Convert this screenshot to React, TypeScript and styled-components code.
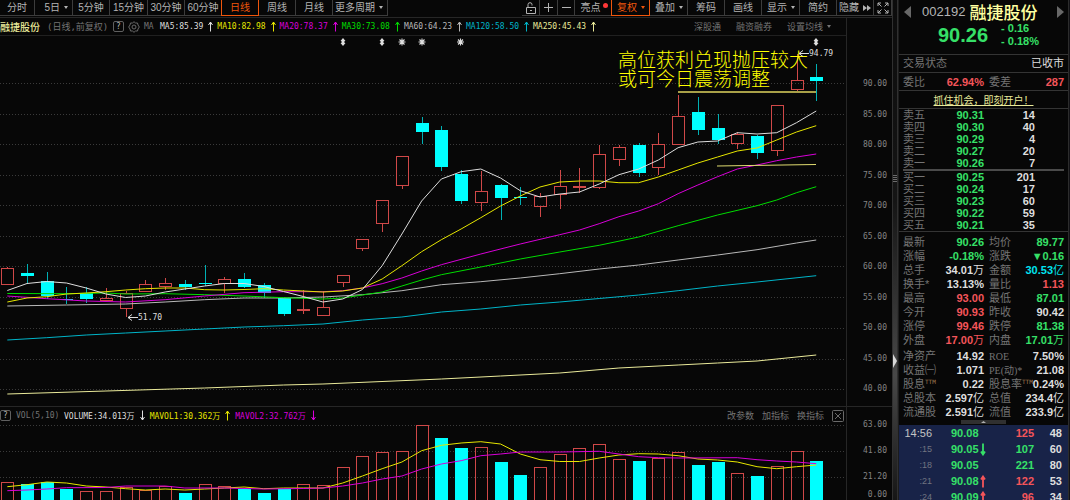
import React from "react";
import styled, { createGlobalStyle } from "styled-components";

const CJK = '"Noto Sans CJK SC", sans-serif';
const MONO = `"DejaVu Sans Mono", ${CJK}`;
const SANS = `"Liberation Sans", ${CJK}`;
const NARROW = `"Liberation Sans Narrow", "Liberation Sans", ${CJK}`;

const color = {
  bg: "#070707",
  line: "#262626",
  dim: "#747474",
  text: "#b4b4b4",
  white: "#dedede",
  red: "#f4555a",
  green: "#36e068",
  cyan: "#00ffff",
  orange: "#f0560c",
  yellow: "#e6e600",
  magenta: "#d800d8",
  lime: "#00dc00",
  grey: "#b8b8b8",
  teal: "#00b4c8",
  cream: "#eaea9a",
};

const GlobalStyle = createGlobalStyle`
  * { box-sizing: border-box; }
  body { margin: 0; background: ${color.bg}; color: ${color.text}; font-family: ${SANS}; font-size: 11px; }
  button { margin: 0; padding: 0; border: 0; background: none; color: inherit; font: inherit; cursor: pointer; }
  table { border-collapse: collapse; border-spacing: 0; }
  svg { display: block; flex: none; }
`;

const Page = styled.div`
  display: grid;
  grid-template-columns: minmax(0, 1fr) 6px 170px 2px;
  height: 100vh;
  overflow: hidden;
`;

const Main = styled.main`
  display: flex;
  flex-direction: column;
  min-width: 0;
  overflow: hidden;
`;

/* toolbar */
const Toolbar = styled.nav`
  display: flex;
  justify-content: space-between;
  flex: none;
  height: 17px;
  font-family: ${NARROW};
  font-size: 10px;
`;
const ToolGroup = styled.div`
  display: flex;
  height: 16px;
`;
const Tool = styled.button<{ $w: number; $active?: boolean; $menu?: boolean }>`
  display: flex;
  align-items: center;
  justify-content: ${(p) => (p.$menu ? "flex-end" : "center")};
  gap: 4px;
  width: ${(p) => p.$w}px;
  padding-right: ${(p) => (p.$menu ? 4 : 0)}px;
  border-right: 1px solid ${(p) => (p.$active ? color.orange : "#3c3c3c")};
  border-bottom: 1px solid ${(p) => (p.$active ? color.orange : "#3c3c3c")};
  box-shadow: ${(p) => (p.$active ? `-1px 0 0 ${color.orange}` : "none")};
  color: ${(p) => (p.$active ? color.orange : color.text)};
  line-height: 15px;
  white-space: nowrap;
`;
const HotDot = styled.i`
  width: 5px;
  height: 5px;
  margin: -4px -2px 0 -2px;
  border-radius: 50%;
  background: #ff3838;
`;

/* indicator legends */
const Legend = styled.header<{ $h: number }>`
  display: flex;
  justify-content: space-between;
  flex: none;
  height: ${(p) => p.$h}px;
  border-top: 1px solid ${color.line};
  font-family: ${MONO};
  font-size: 8px;
`;
const LegendBody = styled.div<{ $underline?: boolean }>`
  display: flex;
  flex: 1;
  align-items: center;
  justify-content: space-between;
  padding-top: ${(p) => (p.$underline ? 0 : 4)}px;
  border-bottom: ${(p) => (p.$underline ? "1px solid #202020" : "0")};
`;
const LegendItems = styled.div<{ $gap: number }>`
  display: flex;
  align-items: center;
  gap: ${(p) => p.$gap}px;
  white-space: nowrap;
`;
const StockTitle = styled.h1`
  margin: 0;
  width: 43px;
  color: ${color.cream};
  font: 500 10px/16px ${CJK};
`;
const Period = styled.span`
  width: 62px;
  color: ${color.dim};
  font-size: 9px;
`;
const IndicatorName = styled.span<{ $w: number }>`
  width: ${(p) => p.$w}px;
  color: ${color.dim};
`;
const IndicatorValue = styled.span<{ $c: string }>`
  display: flex;
  align-items: center;
  gap: 5px;
  color: ${(p) => p.$c};
`;
const LegendLinks = styled.div<{ $gap: number }>`
  display: flex;
  align-items: center;
  gap: ${(p) => p.$gap}px;
  color: ${color.dim};
  font-family: ${CJK};
  font-size: 9px;
`;
const LinkButton = styled.button`
  display: flex;
  align-items: center;
  gap: 4px;
  line-height: 12px;
  white-space: nowrap;
`;
const AxisHead = styled.div`
  width: 46px;
  border-left: 1px solid ${color.line};
`;
const BoxButton = styled.button`
  display: flex;
  align-items: center;
  justify-content: center;
  width: 11px;
  height: 11px;
  border: 1px solid #606060;
  border-radius: 2px;
  color: ${color.text};
  font: 8px/9px ${MONO};
`;

/* charts */
const ChartRow = styled.section<{ $h?: number }>`
  display: flex;
  flex: ${(p) => (p.$h ? "none" : "1 0 0")};
  height: ${(p) => (p.$h ? `${p.$h}px` : "auto")};
  min-height: 0;
  overflow: hidden;
`;
const Plot = styled.svg`
  flex: 1;
  min-width: 0;
  height: 100%;
`;
const Axis = styled.ol`
  flex: none;
  width: 46px;
  margin: 0;
  padding: 0 5px 0 0;
  border-left: 1px solid ${color.line};
  color: #848484;
  font-family: ${MONO};
  font-size: 8px;
  line-height: 10px;
  text-align: right;
  list-style: none;
`;
const PriceAxis = styled(Axis)`
  display: grid;
  align-content: space-between;
  grid-auto-rows: 10px;
  padding-top: 43px;
  padding-bottom: 12px;
`;
const VolumeAxis = styled(Axis)`
  display: flex;
  flex-direction: column;
  li + li {
    margin-top: 16px;
  }
  li:last-child {
    margin-top: auto;
  }
`;

/* splitter */
const Splitter = styled.div`
  display: flex;
  flex-direction: column;
  align-items: center;
  border-left: 1px solid #303030;
  border-right: 1px solid #303030;
  background: linear-gradient(#0c0c0c, #151515 40%, #484848 75%, #161616);
`;
const Grip = styled.svg`
  margin-top: 174px;
`;
const Fold = styled.svg`
  margin-top: 172px;
`;

/* quote panel */
const Side = styled.aside`
  display: flex;
  flex-direction: column;
  min-width: 0;
  overflow: hidden;
  border-left: 1px solid #1c1c1c;
`;
const EdgeStrip = styled.div`
  background: #121216;
  border-left: 1px solid #2c2c2c;
`;
const QuoteHead = styled.header`
  flex: none;
  height: 55px;
  padding: 2px 4px 0 5px;
  border-bottom: 1px solid #343434;
`;
const NameLine = styled.div`
  display: flex;
  align-items: center;
  height: 19px;
`;
const Code = styled.span`
  margin-left: 11px;
  font-size: 13px;
`;
const Name = styled.h2`
  flex: 1;
  margin: 0 0 0 4px;
  color: #ffffa0;
  font: 500 17px/19px ${CJK};
`;
const PriceLine = styled.div`
  display: flex;
  align-items: center;
  gap: 13px;
  padding-left: 34px;
  color: ${color.green};
`;
const LastPrice = styled.strong`
  font-size: 20px;
  line-height: 28px;
`;
const Change = styled.div`
  font: bold 11px/13px ${SANS};
`;
const StatusRow = styled.div`
  display: flex;
  justify-content: space-between;
  flex: none;
  height: 18px;
  padding: 0 4px;
  border-bottom: 1px solid #343434;
  color: ${color.white};
  line-height: 17px;
`;
const Label = styled.span`
  color: ${color.dim};
`;
const Promo = styled.div`
  flex: none;
  height: 18px;
  border-bottom: 1px solid #343434;
  text-align: center;
`;
const PromoLink = styled.a`
  color: ${color.cream};
  font: 10px/17px ${CJK};
`;
const DataTable = styled.table<{ $row: number }>`
  width: 100%;
  table-layout: fixed;
  line-height: 12px;
  white-space: nowrap;
  tr {
    height: ${(p) => p.$row}px;
  }
  th,
  td {
    padding: 0;
  }
  th {
    color: ${color.dim};
    font-weight: normal;
    text-align: left;
  }
`;
const Book = styled.div<{ $last?: boolean }>`
  flex: none;
  margin: 0 4px;
  border-bottom: ${(p) => (p.$last ? "0" : "2px solid #4a4a4a")};
`;
const Rule = styled.hr`
  flex: none;
  width: 100%;
  height: 1px;
  margin: 0;
  border: 0;
  background: #343434;
`;
const Num = styled.td<{ $c?: string }>`
  color: ${(p) => p.$c || color.white};
  font-weight: bold;
  text-align: right;
`;
const Unit = styled.span`
  font-weight: normal;
`;
const Ttm = styled.sup`
  color: #a07850;
  font: 6px/6px ${MONO};
  vertical-align: 4px;
`;
const Stats = styled.div<{ $top: number }>`
  flex: none;
  padding: ${(p) => p.$top}px 4px 0;
`;
const CollapseBar = styled.div`
  display: flex;
  justify-content: center;
  flex: none;
  height: 6px;
  padding-top: 1px;
`;
const CollapseButton = styled.button`
  display: flex;
  align-items: center;
  justify-content: center;
  width: 45px;
  height: 4px;
  background: #303030;
`;
const Ticks = styled.section`
  flex: 1;
  min-height: 0;
  padding: 0 6px 0 3px;
  overflow: hidden;
  background: #182348;
`;
const Time = styled.td<{ $minor?: boolean }>`
  padding-right: 1px;
  color: ${(p) => (p.$minor ? "#707480" : "#c4c4c4")};
  font-size: ${(p) => (p.$minor ? 9 : 11)}px;
  text-align: right;
`;
const TickPrice = styled.td`
  color: ${color.green};
  font-weight: bold;
`;
const TickValue = styled.div`
  display: flex;
  align-items: center;
  gap: 1px;
  padding-left: 19px;
`;
const RomanText = styled.span`
  font-family: "Liberation Serif", ${CJK};
  font-size: 10px;
`;

const Caret = () => (
  <svg width="4" height="3" viewBox="0 0 4 3" aria-hidden>
    <path d="M0 0h4L2 3z" fill="currentColor" />
  </svg>
);

const Arrow = ({ down }: { down?: boolean }) => (
  <svg width="5" height="11" viewBox="0 0 5 11" aria-hidden>
    <path
      d={down ? "M2.5 0.5V10M0.5 7L2.5 10L4.5 7" : "M2.5 10.5V1M0.5 4L2.5 1L4.5 4"}
      fill="none"
      stroke="currentColor"
    />
  </svg>
);

const TickArrow = ({ up }: { up?: boolean }) => (
  <svg width="6" height="13" viewBox="0 0 6 13" aria-hidden>
    <path
      d={up ? "M3 12.5V3M1 4.5L3 1.5L5 4.5" : "M3 0.5V10M1 8.5L3 11.5L5 8.5"}
      fill="none"
      stroke={up ? color.red : color.green}
      strokeWidth="1.8"
    />
  </svg>
);

const periods: { label: string; w: number; caret?: boolean; active?: boolean }[] = [
  { label: "分时", w: 35 },
  { label: "5日", w: 38, caret: true },
  { label: "5分钟", w: 37 },
  { label: "15分钟", w: 38 },
  { label: "30分钟", w: 37 },
  { label: "60分钟", w: 37 },
  { label: "日线", w: 37, active: true },
  { label: "周线", w: 37 },
  { label: "月线", w: 37 },
  { label: "更多周期", w: 55, caret: true },
];

const tools: { label: string; w: number; caret?: boolean; active?: boolean; dot?: boolean }[] = [
  { label: "亮点", w: 37, dot: true },
  { label: "复权", w: 38, caret: true, active: true },
  { label: "叠加", w: 38, caret: true },
  { label: "筹码", w: 37 },
  { label: "画线", w: 37 },
  { label: "显示", w: 38, caret: true },
  { label: "简约", w: 37 },
];

const averages: [string, string][] = [
  ["MA5:85.39", color.white],
  ["MA10:82.98", color.yellow],
  ["MA20:78.37", color.magenta],
  ["MA30:73.08", color.lime],
  ["MA60:64.23", color.grey],
  ["MA120:58.50", color.teal],
  ["MA250:45.43", color.cream],
];

const STEP = 19.73;
const xAt = (i: number) => 7.3 + STEP * i;

/* high, body top, body bottom, low, rising */
const candles: [number, number, number, number, 0 | 1][] = [
  [267, 268, 284, 284, 1], [264, 273, 276, 284, 0], [272, 281, 296, 299, 0], [287, 299, 300, 304, 0],
  [287, 293, 299, 303, 0], [288, 298, 300, 302, 1], [291, 293, 308, 317, 1], [280, 284, 291, 292, 1],
  [278, 283, 286, 290, 1], [280, 284, 287, 290, 0], [265, 283, 284, 286, 0], [277, 279, 283, 293, 1],
  [273, 279, 287, 288, 0], [283, 285, 293, 298, 0], [297, 298, 314, 316, 0], [290, 309, 310, 314, 1],
  [291, 307, 315, 315, 1], [275, 275, 282, 287, 1], [239, 239, 248, 251, 1], [200, 200, 223, 232, 1],
  [156, 156, 185, 189, 1], [117, 123, 132, 144, 0], [126, 130, 167, 171, 0], [170, 174, 201, 204, 0],
  [171, 191, 202, 211, 1], [184, 185, 198, 220, 0], [187, 197, 198, 205, 0], [193, 196, 206, 217, 1],
  [170, 186, 194, 209, 1], [168, 186, 187, 193, 1], [145, 154, 187, 189, 1], [145, 147, 159, 166, 1],
  [143, 145, 173, 177, 0], [133, 144, 167, 175, 1], [95, 116, 144, 144, 1], [97, 112, 130, 135, 0],
  [114, 128, 140, 144, 0], [132, 134, 143, 149, 1], [135, 136, 153, 159, 0], [105, 105, 150, 156, 1],
  [54, 80, 89, 92, 1], [64, 77, 81, 101, 0],
];

type Series = [number, number][];
const dense = (ys: number[]): Series => ys.map((y, i) => [i, y]);

const priceLines: { c: string; pts: Series }[] = [
  { c: color.cream, pts: [[0, 394], [5, 391], [10, 388], [14, 385], [16, 384], [22, 379], [25, 376], [28, 373], [31, 368], [34, 365], [36, 363], [38, 361], [41, 355]] },
  { c: color.teal, pts: [[0, 340], [2, 337.7], [4, 335], [6, 333], [8, 331], [10, 329], [12, 327], [14, 325.7], [16, 324], [18, 320], [20, 317], [22, 312], [24, 309], [26, 305], [28, 302], [30, 298.5], [32, 295], [34, 290.7], [36, 286], [38, 282], [41, 275.7]] },
  { c: color.grey, pts: [[0, 306], [3, 305], [6, 304], [8, 302], [10, 299.7], [12, 298], [14, 298], [16, 297], [18, 294.7], [20, 290.7], [22, 284.7], [24, 281.7], [26, 278], [28, 273.7], [30, 269], [32, 265], [34, 260], [36, 255], [38, 249.7], [40, 243], [41, 240]] },
  { c: color.lime, pts: [[0, 293.5], [3, 293.7], [5, 293], [6, 294], [8, 293.7], [10, 294.7], [12, 296], [14, 297.7], [16, 299], [17, 298], [18, 295], [19, 292], [20, 286], [21, 280], [22, 274.7], [24, 267], [26, 259], [28, 252], [30, 245.3], [32, 237], [34, 225.7], [36, 215], [38, 205.7], [39, 200], [40, 192.7], [41, 186.7]] },
  { c: color.magenta, pts: [[0, 296], [2, 298.7], [4, 301], [6, 302], [8, 299.7], [10, 296], [12, 292.7], [14, 291.7], [16, 291.7], [17, 290.7], [18, 288], [19, 283.7], [20, 278], [21, 271], [22, 264.7], [24, 254], [26, 244], [28, 234.7], [29, 230], [30, 223.7], [31, 216.7], [32, 211], [33, 203.7], [34, 193.7], [35, 185], [36, 176.7], [37, 169], [38, 165], [39, 160.7], [40, 157], [41, 154]] },
  { c: color.yellow, pts: dense([302, 298, 296.7, 294, 293, 291.7, 290, 288.7, 288, 288, 289.7, 290, 289.5, 288.7, 290, 291, 292, 291, 288, 279, 265.7, 251.7, 239.7, 229, 217.7, 206, 196, 187, 182, 181, 181, 182.7, 182.7, 177, 170, 163, 157, 151, 148, 140, 132, 125.7]) },
  { c: color.white, pts: dense([290.5, 283.5, 281.5, 283, 288, 294, 297.5, 296, 292, 289, 286, 283.5, 283.5, 286.5, 291.5, 296.5, 302, 299, 289.5, 265.7, 234, 201, 179, 171.7, 169, 178, 190.7, 197, 194, 192, 184, 174.7, 169, 160, 147.7, 142, 141, 132.7, 134, 132.7, 122.7, 111]) },
];

/* bar top, rising */
const volumes: [number, 0 | 1][] = [
  [482, 1], [484, 0], [482, 0], [489, 0], [491, 1], [491, 1], [487, 1], [490, 1], [486, 1], [493, 0],
  [484, 1], [486, 1], [489, 0], [493, 0], [489, 0], [484, 1], [485, 1], [467, 1], [456, 1], [452, 1],
  [451, 1], [425, 1], [438, 0], [448, 0], [447, 1], [462, 0], [475, 0], [467, 1], [454, 1], [448, 1],
  [444, 1], [459, 1], [461, 0], [458, 1], [452, 1], [465, 0], [462, 0], [473, 1], [476, 0], [466, 1],
  [451, 1], [461, 0],
];

const volumeLines: { c: string; pts: Series }[] = [
  { c: color.yellow, pts: dense([486.7, 484.7, 482, 483, 486, 487, 488.7, 490, 489, 490, 489, 488, 487, 488.7, 488, 488, 488, 483, 476, 468.7, 462, 450.7, 445.3, 443, 441.7, 444, 454, 459.7, 461.5, 461.5, 458, 455, 453.7, 454, 455.7, 459, 460, 462, 466.7, 468.7, 466.7, 465]) },
  { c: color.magenta, pts: [[0, 490.7], [1, 490], [2, 489], [3, 487.7], [5, 487.5], [6, 486], [8, 486], [9, 488], [11, 488], [13, 489], [15, 488.5], [16, 488], [17, 486], [18, 483], [19, 479], [20, 476], [21, 469], [22, 464], [23, 460.7], [24, 455.7], [25, 454], [26, 452], [28, 452], [30, 451.3], [31, 454], [32, 456.7], [33, 457.7], [34, 458], [37, 457.7], [38, 459.7], [39, 461], [40, 462], [41, 463.7]] },
];

const toPoints = (pts: Series) => pts.map(([i, y]) => `${xAt(i)},${y}`).join(" ");

const GridLine = ({ y }: { y: number }) => (
  <line x1="0" x2="100%" y1={y} y2={y} stroke="#3a3a3a" strokeDasharray="1 2" shapeRendering="crispEdges" />
);

const Star = ({ x }: { x: number }) => (
  <path
    d={`M${x} 38.5v7M${x - 3.5} 42h7M${x - 2.5} 39.5l5 5M${x + 2.5} 39.5l-5 5`}
    stroke={color.white}
    strokeWidth="1.1"
  />
);

const Updown = ({ x }: { x: number }) => (
  <path d={`M${x} 38l2.5 3h-1v2h1l-2.5 3l-2.5-3h1v-2h-1z`} fill={color.white} />
);

const PriceChart = () => (
  <ChartRow $h={370}>
    <Plot aria-label="日线">
      <g transform="translate(0 -36)">
        {[83, 114, 144, 175, 205, 236, 266, 297, 328, 359, 389].map((y) => (
          <GridLine key={y} y={y + 0.5} />
        ))}
        <g shapeRendering="crispEdges">
          {candles.map(([high, top, bottom, low, up], i) => {
            const x = Math.round(xAt(i));
            return up ? (
              <g key={i} stroke="#d04848" fill="none">
                <path d={`M${x + 0.5} ${high}V${top}M${x + 0.5} ${bottom}V${low}`} />
                <rect x={x - 6 + 0.5} y={top + 0.5} width="12" height={bottom - top} />
              </g>
            ) : (
              <g key={i}>
                <path d={`M${x + 0.5} ${high}V${low}`} stroke="#00b0b4" />
                <rect x={x - 6} y={top} width="13" height={bottom - top} fill={color.cyan} />
              </g>
            );
          })}
        </g>
        <g fill="#ffff00" fontFamily={CJK} fontSize="19" fontWeight="300">
          <text x="618" y="67">高位获利兑现抛压较大</text>
          <text x="618" y="86">或可今日震荡调整</text>
        </g>
        {priceLines.map(({ c, pts }) => (
          <polyline key={c} points={toPoints(pts)} fill="none" stroke={c} />
        ))}
        <path d="M678 92H816" stroke="#a8a048" strokeWidth="2" />
        <path d="M717 166L816 164.5" stroke="#e0dc70" />
        <Updown x={343} />
        <Updown x={382} />
        <Star x={402} />
        <Star x={422} />
        <Star x={460.5} />
        <Updown x={816} />
        <g stroke={color.white} fill="none">
          <path d="M799 53.5H809M803 50.5L799 53.5L803 56.5" />
          <path d="M128 317.5H138M132 314.5L128 317.5L132 320.5" />
        </g>
        <g fill={color.white} fontFamily={MONO} fontSize="8">
          <text x="809" y="56">94.79</text>
          <text x="138" y="320">51.70</text>
        </g>
      </g>
    </Plot>
    <PriceAxis>
      {[90, 85, 80, 75, 70, 65, 60, 55, 50, 45, 40].map((v) => (
        <li key={v}>{v.toFixed(2)}</li>
      ))}
    </PriceAxis>
  </ChartRow>
);

const VolumeChart = () => (
  <ChartRow>
    <Plot aria-label="VOL">
      <g transform="translate(0 -420)">
        {[425, 451, 477].map((y) => (
          <GridLine key={y} y={y + 0.5} />
        ))}
        <g shapeRendering="crispEdges">
          {volumes.map(([top, up], i) => {
            const x = Math.round(xAt(i));
            return up ? (
              <rect key={i} x={x - 6 + 0.5} y={top + 0.5} width="12" height={503 - top} fill="none" stroke="#d04848" />
            ) : (
              <rect key={i} x={x - 6} y={top} width="13" height={503 - top} fill={color.cyan} />
            );
          })}
        </g>
        {volumeLines.map(({ c, pts }) => (
          <polyline key={c} points={toPoints(pts)} fill="none" stroke={c} />
        ))}
      </g>
    </Plot>
    <VolumeAxis>
      <li>63.00</li>
      <li>41.80</li>
      <li>21.20</li>
      <li>0.00</li>
    </VolumeAxis>
  </ChartRow>
);

const asks = [["卖五", "90.31", "14"], ["卖四", "90.30", "40"], ["卖三", "90.29", "4"], ["卖二", "90.27", "20"], ["卖一", "90.26", "7"]];
const bids = [["买一", "90.25", "201"], ["买二", "90.24", "17"], ["买三", "90.23", "60"], ["买四", "90.22", "59"], ["买五", "90.21", "35"]];

const Cols = ({ widths }: { widths: number[] }) => (
  <colgroup>
    {widths.map((w, i) => (
      <col key={i} width={w} />
    ))}
    <col />
  </colgroup>
);

const BookTable = ({ rows }: { rows: string[][] }) => (
  <DataTable $row={12}>
    <Cols widths={[40, 41, 51]} />
    <tbody>
      {rows.map(([label, price, qty]) => (
        <tr key={label}>
          <th scope="row">{label}</th>
          <Num $c={color.green}>{price}</Num>
          <Num>{qty}</Num>
          <td />
        </tr>
      ))}
    </tbody>
  </DataTable>
);

type Cell = [React.ReactNode, string, string?, string?];
const G = color.green;
const R = color.red;
const W = color.white;
const ratios: [Cell, Cell][] = [[["委比", "62.94%", R], ["委差", "287", R]]];
const market: [Cell, Cell][] = [
  [["最新", "90.26", G], ["均价", "89.77", G]],
  [["涨幅", "-0.18%", G], ["涨跌", "▼0.16", G]],
  [["总手", "34.01", W, "万"], ["金额", "30.53", "#00e4f0", "亿"]],
  [["换手*", "13.13%", W], ["量比", "1.13", R]],
  [["最高", "93.00", R], ["最低", "87.01", G]],
  [["今开", "90.93", R], ["昨收", "90.42", W]],
  [["涨停", "99.46", R], ["跌停", "81.38", G]],
  [["外盘", "17.00", R, "万"], ["内盘", "17.01", G, "万"]],
];
const fundamentals: [Cell, Cell][] = [
  [["净资产", "14.92", W], [<RomanText>ROE</RomanText>, "7.50%", W]],
  [["收益㈠", "1.071", W], [<RomanText>PE(动)*</RomanText>, "21.08", W]],
  [[<>股息<Ttm>TTM</Ttm></>, "0.22", W], [<>股息率<Ttm>TTM</Ttm></>, "0.24%", W]],
  [["总股本", "2.597", W, "亿"], ["总值", "234.4", W, "亿"]],
  [["流通股", "2.591", W, "亿"], ["流值", "233.9", W, "亿"]],
];

const StatCells = ({ cell: [label, value, c, unit] }: { cell: Cell }) => (
  <>
    <th scope="row">{label}</th>
    <Num $c={c}>
      {value}
      {unit && <Unit>{unit}</Unit>}
    </Num>
  </>
);

const StatTable = ({ rows, row = 14 }: { rows: [Cell, Cell][]; row?: number }) => (
  <DataTable $row={row}>
    <Cols widths={[38, 43, 5, 34]} />
    <tbody>
      {rows.map(([a, b], i) => (
        <tr key={i}>
          <StatCells cell={a} />
          <td />
          <StatCells cell={b} />
        </tr>
      ))}
    </tbody>
  </DataTable>
);

const ticks: { t: string; p: string; dir?: "up" | "down"; v: string; c: string; n: string }[] = [
  { t: "14:56", p: "90.08", v: "125", c: R, n: "48" },
  { t: ":15", p: "90.05", dir: "down", v: "107", c: G, n: "60" },
  { t: ":18", p: "90.05", v: "221", c: G, n: "80" },
  { t: ":21", p: "90.08", dir: "up", v: "122", c: R, n: "53" },
  { t: ":24", p: "90.09", dir: "up", v: "96", c: R, n: "34" },
];

const Triangle = ({ left }: { left?: boolean }) => (
  <svg width="7" height="12" viewBox="0 0 7 12" aria-hidden>
    <path d={left ? "M7 0V12L0 6z" : "M0 0V12L7 6z"} fill="#686868" />
  </svg>
);

export default function App() {
  return (
    <>
      <GlobalStyle />
      <Page>
        <Main>
          <Toolbar>
            <ToolGroup>
              {periods.map((p) => (
                <Tool key={p.label} $w={p.w} $active={p.active} $menu={p.caret}>
                  {p.label}
                  {p.caret && <Caret />}
                </Tool>
              ))}
            </ToolGroup>
            <ToolGroup>
              <Tool $w={18} aria-label="解锁">
                <svg width="12" height="12" viewBox="0 0 12 12" fill="none" stroke="currentColor">
                  <path d="M1.5 5.5H10.5V11.5H1.5zM3 5.5V2.5Q3 0.7 5 0.7Q7 0.7 7 2.5V3.5M5 8.5H7" />
                </svg>
              </Tool>
              <Tool $w={18} aria-label="放大">
                <svg width="11" height="11" viewBox="0 0 11 11" stroke="currentColor">
                  <path d="M1 5.5H10M5.5 1V10" />
                </svg>
              </Tool>
              <Tool $w={17} aria-label="缩小">
                <svg width="11" height="11" viewBox="0 0 11 11" stroke="currentColor">
                  <path d="M1 5.5H10" />
                </svg>
              </Tool>
              {tools.map((t) => (
                <Tool key={t.label} $w={t.w} $active={t.active} $menu={t.caret}>
                  {t.label}
                  {t.caret && <Caret />}
                  {t.dot && <HotDot />}
                </Tool>
              ))}
              <Tool $w={37}>
                隐藏
                <svg width="8" height="6" viewBox="0 0 8 6" aria-hidden>
                  <path d="M0 0L4 3L0 6zM4 0L8 3L4 6z" fill="currentColor" />
                </svg>
              </Tool>
              <Tool $w={18} aria-label="全屏">
                <svg width="12" height="12" viewBox="0 0 12 12" fill="none" stroke="currentColor">
                  <path d="M1 4V1H4M1 1L4.5 4.5M8 1H11V4M11 1L7.5 4.5M1 8V11H4M1 11L4.5 7.5M11 8V11H8M11 11L7.5 7.5" />
                </svg>
              </Tool>
            </ToolGroup>
          </Toolbar>

          <Legend $h={19}>
            <LegendBody $underline>
              <LegendItems $gap={4}>
                <StockTitle>融捷股份</StockTitle>
                <Period>(日线,前复权)</Period>
                <BoxButton aria-label="帮助">?</BoxButton>
                <svg width="12" height="12" viewBox="0 0 12 12" fill="none" stroke="#6a6a6a">
                  <path d="M6 0.7L7.5 2L9.5 2L10 4L11.3 6L10 8L9.5 10L7.5 10L6 11.3L4.5 10L2.5 10L2 8L0.7 6L2 4L2.5 2L4.5 2z" />
                  <circle cx="6" cy="6" r="2" />
                </svg>
                <IndicatorName $w={12}>MA</IndicatorName>
                {averages.map(([text, c]) => (
                  <IndicatorValue key={text} $c={c}>
                    {text}
                    <Arrow />
                  </IndicatorValue>
                ))}
              </LegendItems>
              <LegendLinks $gap={15}>
                <LinkButton>深股通</LinkButton>
                <LinkButton>融资融券</LinkButton>
                <LinkButton>
                  设置均线
                  <Caret />
                </LinkButton>
                <span />
              </LegendLinks>
            </LegendBody>
            <AxisHead />
          </Legend>
          <PriceChart />

          <Legend $h={14}>
            <LegendBody>
              <LegendItems $gap={5}>
                <BoxButton aria-label="帮助">?</BoxButton>
                <IndicatorName $w={43}>VOL(5,10)</IndicatorName>
                <IndicatorValue $c={W}>
                  VOLUME:34.013万
                  <Arrow down />
                </IndicatorValue>
                <IndicatorValue $c={color.yellow}>
                  MAVOL1:30.362万
                  <Arrow />
                </IndicatorValue>
                <IndicatorValue $c={color.magenta}>
                  MAVOL2:32.762万
                  <Arrow down />
                </IndicatorValue>
              </LegendItems>
              <LegendLinks $gap={8}>
                <LinkButton>改参数</LinkButton>
                <LinkButton>加指标</LinkButton>
                <LinkButton>换指标</LinkButton>
                <LinkButton aria-label="关闭">
                  <svg width="14" height="12" viewBox="0 0 14 12" fill="none" stroke="#6a6a6a">
                    <rect x="0.5" y="0.5" width="11" height="11" rx="1" />
                    <path d="M3 3L9 9M9 3L3 9" />
                  </svg>
                </LinkButton>
              </LegendLinks>
            </LegendBody>
            <AxisHead />
          </Legend>
          <VolumeChart />
        </Main>

        <Splitter>
          <Grip width="4" height="8" viewBox="0 0 4 8" stroke="#6c6c6c">
            <path d="M0 1.5H4M0 3.5H4M0 5.5H4M0 7.5H4" />
          </Grip>
          <Fold width="4" height="14" viewBox="0 0 4 14">
            <path d="M0 0L4 7L0 14z" fill="#d8d8d8" />
          </Fold>
        </Splitter>

        <Side>
          <QuoteHead>
            <NameLine>
              <Triangle left />
              <Code>002192</Code>
              <Name>融捷股份</Name>
              <Triangle />
            </NameLine>
            <PriceLine>
              <LastPrice>90.26</LastPrice>
              <Change>
                - 0.16
                <br />- 0.18%
              </Change>
            </PriceLine>
          </QuoteHead>
          <StatusRow>
            <Label>交易状态</Label>
            <span>已收市</span>
          </StatusRow>
          <StatusRow>
            <StatTable rows={ratios} row={17} />
          </StatusRow>
          <Promo>
            <PromoLink href="#account">抓住机会，即刻开户！</PromoLink>
          </Promo>
          <Book>
            <BookTable rows={asks} />
          </Book>
          <Book $last>
            <BookTable rows={bids} />
          </Book>
          <Rule />
          <Stats $top={3}>
            <StatTable rows={market} />
          </Stats>
          <Stats $top={2}>
            <StatTable rows={fundamentals} />
          </Stats>
          <CollapseBar>
            <CollapseButton aria-label="收起">
              <svg width="5" height="2" viewBox="0 0 5 2">
                <path d="M0 2L2.5 0L5 2z" fill="#b0b0b0" />
              </svg>
            </CollapseButton>
          </CollapseBar>
          <Ticks>
            <DataTable $row={16}>
              <Cols widths={[30, 66, 36]} />
              <tbody>
                {ticks.map((k) => (
                  <tr key={k.t}>
                    <Time $minor={k.t.startsWith(":")}>{k.t}</Time>
                    <TickPrice>
                      <TickValue>
                        {k.p}
                        {k.dir && <TickArrow up={k.dir === "up"} />}
                      </TickValue>
                    </TickPrice>
                    <Num $c={k.c}>{k.v}</Num>
                    <Num>{k.n}</Num>
                  </tr>
                ))}
              </tbody>
            </DataTable>
          </Ticks>
        </Side>
        <EdgeStrip />
      </Page>
    </>
  );
}
